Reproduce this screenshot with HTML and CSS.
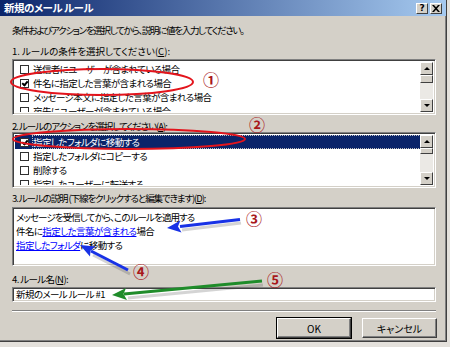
FILE: index.html
```html
<!DOCTYPE html>
<html lang="ja">
<head>
  <meta charset="UTF-8" />
  <title>新規のメール ルール</title>
  <link rel="stylesheet" href="styles.css">
</head>
<body>

  <div class="dialog">
    <div class="titlebar">
      <span class="title">新規のメール ルール</span>
      <div class="caption-btns">
        <span class="cbtn help">?</span>
        <span class="cbtn close">
          <svg width="8" height="7" viewBox="0 0 8 7"><path d="M0 0h2l2 2.2L6 0h2L5 3.5 8 7H6L4 4.8 2 7H0l3-3.5z" fill="#000"/></svg>
        </span>
      </div>
    </div>

    <div class="content">
      <p class="intro">条件およびアクションを選択してから、説明に値を入力してください。</p>

      <div class="group-label label-1">1. ルールの条件を選択してください(<u>C</u>):</div>
      <div class="listbox">
        <ul class="items">
          <li><span class="check"></span>送信者にユーザーが含まれている場合</li>
          <li><span class="check checked"></span>件名に指定した言葉が含まれる場合</li>
          <li><span class="check"></span>メッセージ本文に指定した言葉が含まれる場合</li>
          <li><span class="check"></span>宛先にユーザーが含まれている場合</li>
        </ul>
        <div class="scrollbar">
          <span class="sb-btn up"></span>
          <span class="sb-thumb"></span>
          <span class="sb-track"></span>
          <span class="sb-btn down"></span>
        </div>
      </div>

      <div class="group-label label-2">2. ルールのアクションを選択してください(<u>A</u>):</div>
      <div class="listbox">
        <ul class="items">
          <li class="selected"><span class="check checked"></span><span class="focus">指定したフォルダに移動する</span></li>
          <li><span class="check"></span>指定したフォルダにコピーする</li>
          <li><span class="check"></span>削除する</li>
          <li><span class="check"></span>指定したユーザーに転送する</li>
        </ul>
        <div class="scrollbar">
          <span class="sb-btn up"></span>
          <span class="sb-thumb short"></span>
          <span class="sb-track"></span>
          <span class="sb-btn down"></span>
        </div>
      </div>

      <div class="group-label label-3">3. ルールの説明 (下線をクリックすると編集できます)(<u>D</u>):</div>
      <div class="description">
        <div class="desc-first">メッセージを受信してから、このルールを適用する</div>
        <div>件名に<a class="link">指定した言葉が含まれる</a>場合</div>
        <div><a class="link">指定したフォルダ</a>に移動する</div>
      </div>

      <div class="group-label label-4">4. ルール名(<u>N</u>):</div>
      <div class="name-input">新規のメール ルール #1</div>

      <div class="separator"></div>

      <div class="buttons">
        <span class="btn default">OK</span>
        <span class="btn">キャンセル</span>
      </div>
    </div>
  </div>

  <svg class="marks" width="450" height="347" viewBox="0 0 450 347">
    <!-- red circles around the checked items -->
    <ellipse cx="102" cy="82" rx="91" ry="13" fill="none" stroke="#e3141c" stroke-width="2"/>
    <ellipse cx="129" cy="139" rx="116" ry="10" fill="none" stroke="#e3141c" stroke-width="2"/>

    <!-- arrow shadows -->
    <g stroke="rgba(60,60,60,0.22)" stroke-width="3" fill="none">
      <path d="M241 223 L182 230"/>
      <path d="M130 274 L93 255"/>
      <path d="M263 285 L128 298"/>
    </g>

    <!-- blue arrows -->
    <path d="M240 219.5 L180 226.5" stroke="#1832e6" stroke-width="3" fill="none"/>
    <polygon points="167,228 181.5,232.5 178,226.5 180.4,220.5" fill="#1832e6"/>
    <path d="M128 270 L91 251" stroke="#1832e6" stroke-width="3" fill="none"/>
    <polygon points="80,245 95.5,246.5 90.5,250.8 90,256.5" fill="#1832e6"/>

    <!-- green arrow -->
    <path d="M262 281 L124 294" stroke="#1f8c2a" stroke-width="3" fill="none"/>
    <polygon points="112,295 127,300 123.5,294 126,288" fill="#1f8c2a"/>

    <g class="num">
      <text x="211" y="86">①</text>
      <text x="257" y="131">②</text>
      <text x="254" y="225">③</text>
      <text x="141" y="278">④</text>
      <text x="275" y="286">⑤</text>
    </g>
  </svg>

</body>
</html>
```

FILE: styles.css
```css
body {
  margin: 0;
  background: #e4e1dc;
  font-family: "Noto Sans CJK JP", "Noto Sans", sans-serif;
  font-size: 9.5px;
  letter-spacing: -0.6px;
  font-feature-settings: "palt";
  color: #000;
  position: relative;
  width: 450px;
  height: 347px;
  overflow: hidden;
}

.dialog {
  width: 446px;
  height: 341px;
  background: #d4d0c8;
  border-right: 1px solid #404040;
  border-bottom: 1px solid #404040;
  box-shadow: inset -1px -1px #808080;
  display: flex;
  flex-direction: column;
}

.titlebar {
  height: 16px;
  background: linear-gradient(to right, #0a246a, #a6caf0);
  display: flex;
  align-items: center;
  justify-content: space-between;
  padding: 0 4px 0 4px;
}

.title {
  color: #fff;
  font-weight: bold;
  font-size: 10.5px;
  letter-spacing: -0.5px;
  line-height: 16px;
}

.caption-btns {
  display: flex;
  gap: 2px;
  margin-top: 1px;
}

.cbtn {
  width: 12px;
  height: 11px;
  background: #d4d0c8;
  border: 1px solid;
  border-color: #fff #404040 #404040 #fff;
  box-sizing: border-box;
  display: flex;
  align-items: center;
  justify-content: center;
  font-family: "DejaVu Sans", sans-serif;
  font-weight: bold;
  font-size: 9px;
  line-height: 9px;
  letter-spacing: 0;
}

.content {
  padding: 0 10px 0 12px;
  display: flex;
  flex-direction: column;
}

.intro {
  margin: 7px 0 0;
  line-height: 14px;
  letter-spacing: -1.3px;
}

.group-label {
  line-height: 12px;
  white-space: nowrap;
}

.label-1 { margin: 8px 0 2px; letter-spacing: 0; }
.label-2 { margin: 5px 0 0; letter-spacing: -1px; }
.label-3 { margin: 4px 0 3px; letter-spacing: -1.1px; }
.label-4 { margin: 7px 0 2px; }

.listbox,
.description,
.name-input {
  background: #fff;
  border: 1px solid;
  border-color: #808080 #fff #fff #808080;
  box-shadow: inset 1px 1px #404040, inset -1px -1px #d4d0c8;
  box-sizing: border-box;
  width: 424px;
}

.listbox {
  height: 56px;
  display: flex;
  padding: 2px;
  overflow: hidden;
}

.items {
  list-style: none;
  margin: 0;
  padding: 0;
  flex: 1;
  overflow: hidden;
}

.items li {
  height: 14px;
  line-height: 14px;
  display: flex;
  align-items: center;
  padding-left: 5px;
  white-space: nowrap;
}

.items li.selected {
  background: #0a246a;
  color: #fff;
}

.focus {
  outline: 1px dotted #c0c0c0;
  flex: 1;
  height: 12px;
  line-height: 12px;
}

.check {
  width: 9px;
  height: 9px;
  border: 1px solid #303030;
  background: #fff;
  box-sizing: border-box;
  margin-right: 4px;
  flex: none;
  position: relative;
}

.check.checked::after {
  content: "";
  position: absolute;
  left: 1px;
  top: 0;
  width: 2px;
  height: 4px;
  border: solid #000;
  border-width: 0 2px 2px 0;
  transform: translate(1px, 0) rotate(40deg);
}

.scrollbar {
  width: 13px;
  display: flex;
  flex-direction: column;
  background: #ebe9e5;
}

.sb-btn,
.sb-thumb {
  background: #d4d0c8;
  border: 1px solid;
  border-color: #fff #404040 #404040 #fff;
  box-sizing: border-box;
  flex: none;
}

.sb-btn {
  height: 13px;
  position: relative;
}

.sb-btn::after {
  content: "";
  position: absolute;
  left: 3px;
  border-left: 3px solid transparent;
  border-right: 3px solid transparent;
}

.sb-btn.up::after {
  top: 4px;
  border-bottom: 3px solid #000;
}

.sb-btn.down::after {
  top: 4px;
  border-top: 3px solid #000;
}

.sb-thumb {
  height: 8px;
}

.sb-thumb.short {
  height: 6px;
}

.sb-track {
  flex: 1;
}

.description {
  height: 59px;
  padding: 2px 3px;
  line-height: 14px;
}

.desc-first {
  letter-spacing: -0.9px;
}

.link {
  color: #0000ff;
  text-decoration: underline;
}

.name-input {
  height: 15px;
  padding: 0 3px;
  line-height: 13px;
}

.separator {
  margin-top: 8px;
  width: 424px;
  height: 0;
  border-top: 1px solid #808080;
  border-bottom: 1px solid #fff;
}

.buttons {
  margin-top: 6px;
  display: flex;
  justify-content: flex-end;
  gap: 11px;
  margin-right: -1px;
}

.btn {
  width: 75px;
  height: 20px;
  box-sizing: border-box;
  background: #d4d0c8;
  border: 1px solid;
  border-color: #fff #404040 #404040 #fff;
  box-shadow: inset -1px -1px #808080;
  display: flex;
  align-items: center;
  justify-content: center;
  font-size: 10px;
  letter-spacing: 0;
}

.btn.default {
  outline: 1px solid #000;
  width: 74px;
}

.marks {
  position: absolute;
  top: 0;
  left: 0;
  pointer-events: none;
}

.num text {
  fill: #a8171b;
  font-family: "Noto Sans CJK JP", sans-serif;
  font-size: 16px;
  font-weight: bold;
  letter-spacing: 0;
  text-anchor: middle;
}
```
